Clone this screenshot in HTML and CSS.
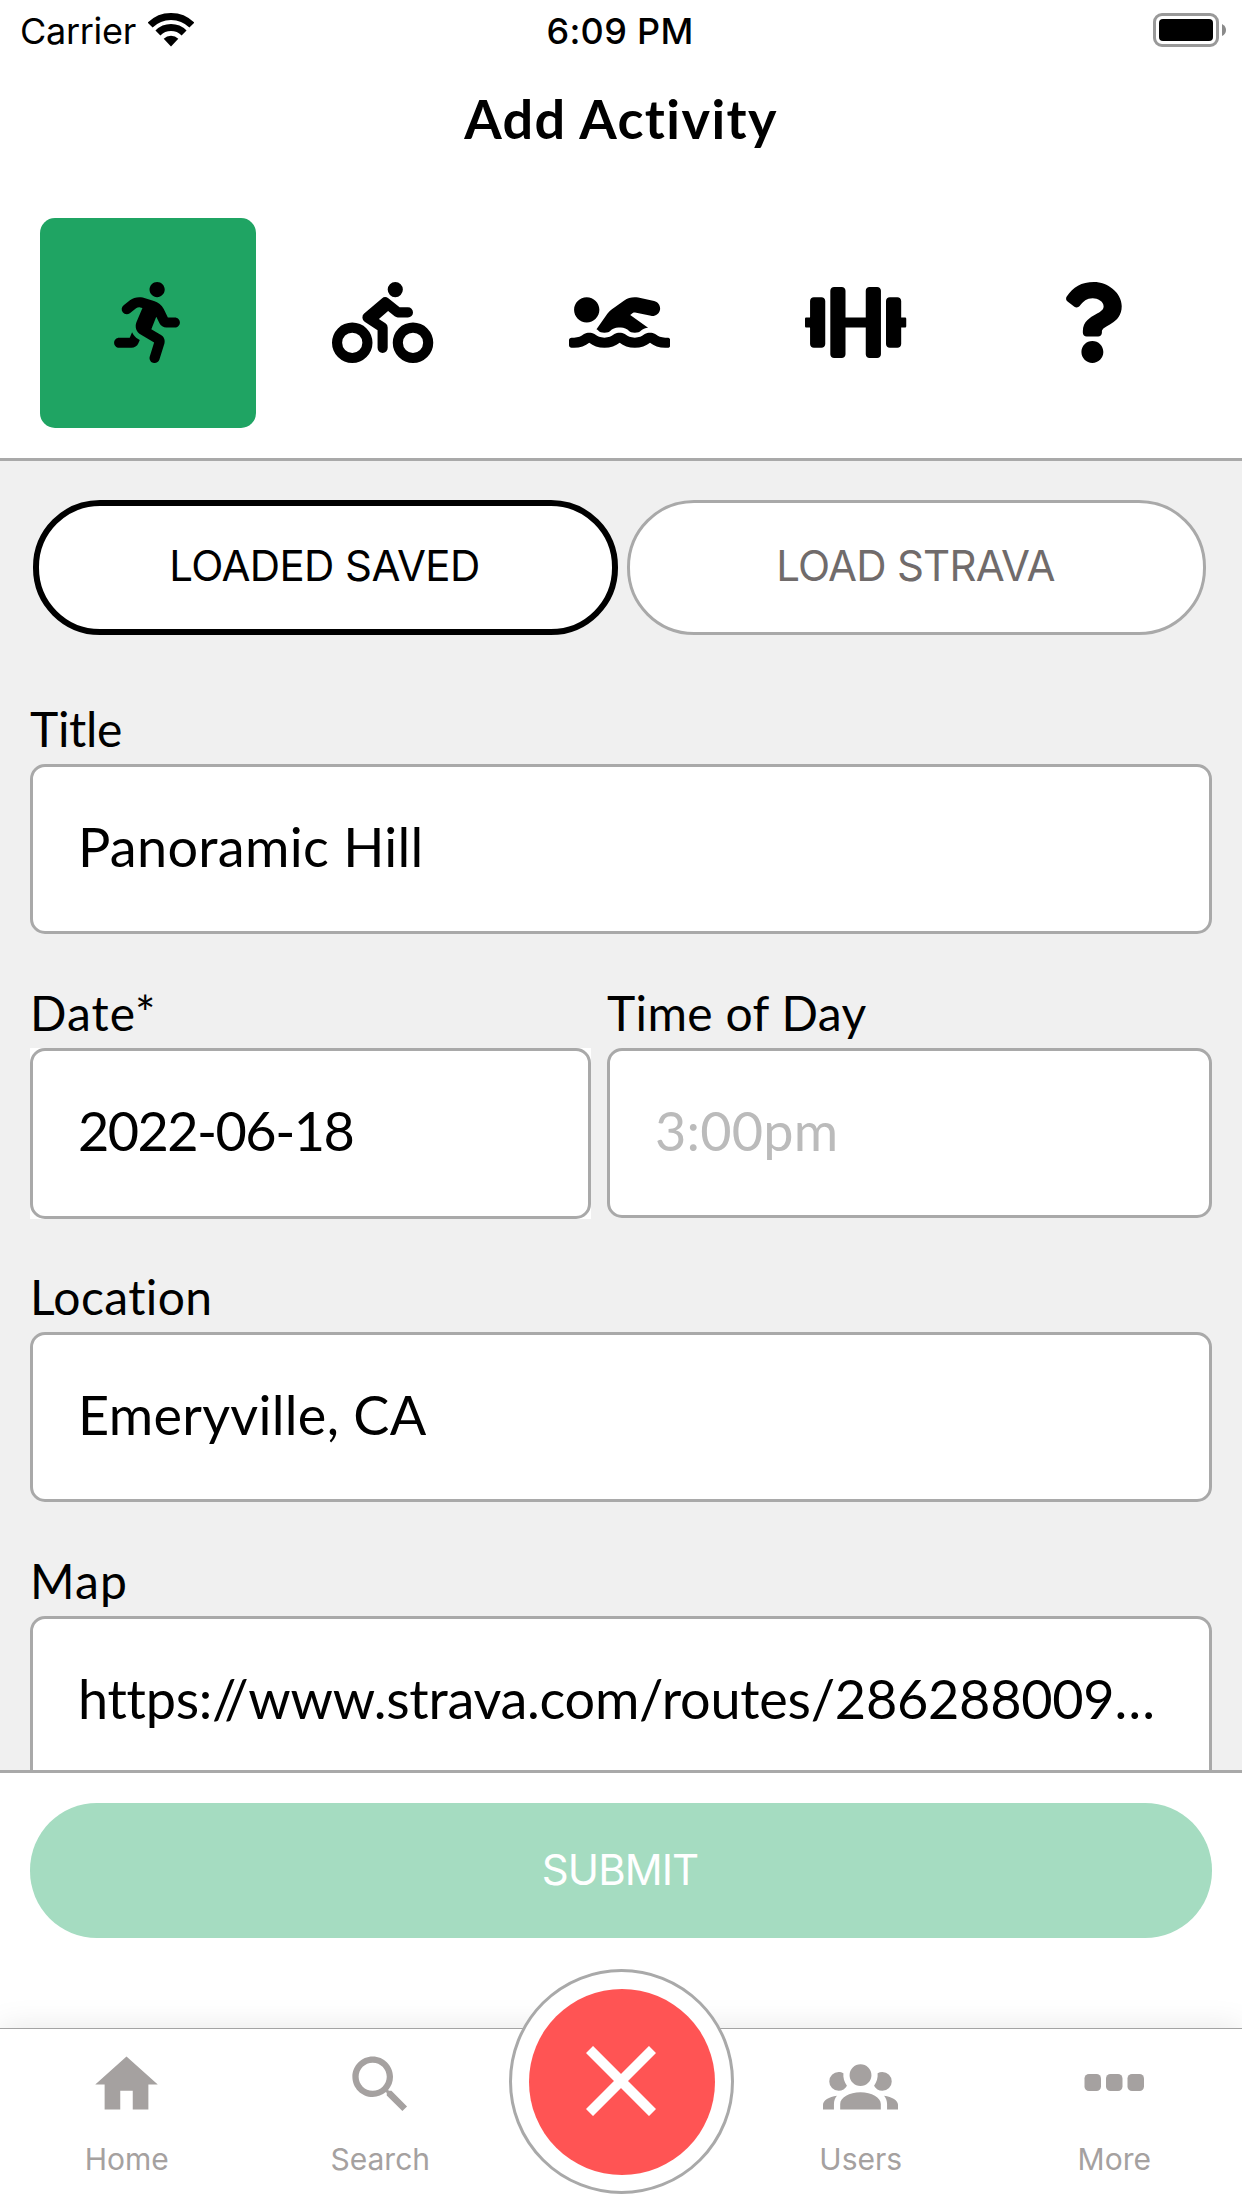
FILE: index.html
```
<!DOCTYPE html>
<html lang="en">
<head>
<meta charset="utf-8">
<title>Add Activity</title>
<link rel="stylesheet" href="styles.css">
</head>
<body>
<div class="screen">
  <div class="status">
    <div class="status-left">
      <span>Carrier</span>
      <svg class="wifi" viewBox="0 0 46 34" aria-hidden="true">
        <path d="M2.14 12.14A29.5 29.5 0 0 1 43.86 12.14M9.92 19.92A18.5 18.5 0 0 1 36.08 19.92" fill="none" stroke="#000" stroke-width="7"/>
        <path d="M23 33.5L15.7 25.7A10.5 10.5 0 0 1 30.3 25.7Z"/>
      </svg>
    </div>
    <span class="clock">6:09 PM</span>
    <svg class="battery" viewBox="0 0 74 34" aria-hidden="true">
      <rect x="1.5" y="1.5" width="63" height="31" rx="7.5" fill="none" stroke="#999" stroke-width="3"/>
      <rect x="6" y="6" width="54" height="22" rx="4" />
      <path d="M69 11Q73 13 73 17T69 23Z" fill="#8a8a8a"/>
    </svg>
  </div>

  <h1 class="title">Add Activity</h1>

  <div class="kinds">
    <button class="kind kind-on" aria-label="Run"><svg class="i416" viewBox="0 0 416 512"><path d="M272 96c26.51 0 48-21.49 48-48S298.51 0 272 0s-48 21.49-48 48 21.49 48 48 48zM113.69 317.47l-14.8 34.52H32c-17.67 0-32 14.33-32 32s14.33 32 32 32h77.45c19.25 0 36.58-11.44 44.11-29.09l8.79-20.52-10.67-6.3c-17.32-10.23-30.06-25.37-37.99-42.61zM384 223.99h-44.03l-26.06-53.25c-12.5-25.55-35.45-44.23-61.78-50.94l-71.08-21.14c-28.3-6.8-57.77-.55-80.84 17.14l-39.67 30.41c-14.03 10.75-16.69 30.83-5.92 44.86s30.84 16.66 44.86 5.92l39.69-30.41c7.67-5.89 17.44-8 25.27-6.14l14.7 4.37-37.46 87.39c-12.62 29.48-1.31 64.01 26.3 80.31l84.98 50.17-27.47 87.73c-5.28 16.86 4.11 34.82 20.97 40.09 3.19 1 6.41 1.48 9.58 1.48 13.61 0 26.23-8.77 30.52-22.45l31.64-101.06c5.91-20.77-2.89-43.08-21.64-54.13l-61.24-36.14 31.31-78.28 20.27 41.43c8 16.34 24.92 26.89 43.11 26.89H384c17.67 0 32-14.33 32-32s-14.33-31.99-32-31.99z"/></svg></button>
    <button class="kind" aria-label="Ride"><svg class="i640" viewBox="0 0 640 512"><path d="M400 96a48 48 0 1 0-48-48 48 48 0 0 0 48 48zm-4 121a31.9 31.9 0 0 0 20 7h64a32 32 0 0 0 0-64h-52.78L356 103a31.94 31.94 0 0 0-40.81.68l-112 96a32 32 0 0 0 3.08 50.92L288 305.12V416a32 32 0 0 0 64 0V288a32 32 0 0 0-14.25-26.62l-41.36-27.57 58.25-49.92zm116 39a128 128 0 1 0 128 128 128 128 0 0 0-128-128zm0 192a64 64 0 1 1 64-64 64 64 0 0 1-64 64zM128 256a128 128 0 1 0 128 128 128 128 0 0 0-128-128zm0 192a64 64 0 1 1 64-64 64 64 0 0 1-64 64z"/></svg></button>
    <button class="kind" aria-label="Swim"><svg class="i640" viewBox="0 0 640 512"><path d="M189.61 310.58c3.54 3.26 15.27 9.42 34.39 9.42s30.86-6.16 34.39-9.42c16.02-14.77 34.5-22.58 53.46-22.58h16.3c18.96 0 37.45 7.81 53.46 22.58 3.54 3.26 15.27 9.42 34.39 9.42s30.86-6.16 34.39-9.42c14.86-13.71 31.88-21.12 49.39-22.16l-112.84-80.6 18-12.86c3.64-2.58 8.28-3.52 12.62-2.61l100.35 21.53c25.91 5.53 51.44-10.97 57-36.88 5.55-25.92-10.95-51.44-36.88-57L437.68 98.47c-30.73-6.58-63.02.12-88.56 18.38l-80.02 57.17c-10.38 7.39-19.36 16.44-26.72 26.94L173.75 299c5.47 3.23 10.82 6.93 15.86 11.58zM624 352h-16c-26.04 0-45.8-8.42-56.09-17.9-8.9-8.21-19.66-14.1-31.77-14.1h-16.3c-12.11 0-22.87 5.89-31.77 14.1C461.8 343.58 442.04 352 416 352s-45.8-8.42-56.09-17.9c-8.9-8.21-19.66-14.1-31.77-14.1h-16.3c-12.11 0-22.87 5.89-31.77 14.1C269.8 343.58 250.04 352 224 352s-45.8-8.42-56.09-17.9c-8.9-8.21-19.66-14.1-31.77-14.1h-16.3c-12.11 0-22.87 5.89-31.77 14.1C77.8 343.58 58.04 352 32 352H16c-8.84 0-16 7.16-16 16v32c0 8.84 7.16 16 16 16h16c38.62 0 72.72-12.19 96-31.84 23.28 19.66 57.38 31.84 96 31.84s72.72-12.19 96-31.84c23.28 19.66 57.38 31.84 96 31.84s72.72-12.19 96-31.84c23.28 19.66 57.38 31.84 96 31.84h16c8.84 0 16-7.16 16-16v-32c0-8.84-7.16-16-16-16zm-512-96c44.18 0 80-35.82 80-80s-35.82-80-80-80-80 35.82-80 80 35.82 80 80 80z"/></svg></button>
    <button class="kind" aria-label="Lift"><svg class="i640" viewBox="0 0 640 512"><path d="M104 96H56c-13.3 0-24 10.7-24 24v104H8c-4.4 0-8 3.6-8 8v48c0 4.4 3.6 8 8 8h24v104c0 13.3 10.7 24 24 24h48c13.3 0 24-10.7 24-24V120c0-13.3-10.7-24-24-24zm528 128h-24V120c0-13.3-10.7-24-24-24h-48c-13.3 0-24 10.7-24 24v272c0 13.3 10.7 24 24 24h48c13.3 0 24-10.7 24-24V288h24c4.4 0 8-3.6 8-8v-48c0-4.4-3.6-8-8-8zM456 32h-48c-13.3 0-24 10.7-24 24v168H256V56c0-13.3-10.7-24-24-24h-48c-13.3 0-24 10.7-24 24v400c0 13.3 10.7 24 24 24h48c13.3 0 24-10.7 24-24V288h128v168c0 13.3 10.7 24 24 24h48c13.3 0 24-10.7 24-24V56c0-13.3-10.7-24-24-24z"/></svg></button>
    <button class="kind" aria-label="Other"><svg class="i384" viewBox="0 0 384 512"><path d="M202.021 0C122.202 0 70.503 32.703 29.914 91.026c-7.363 10.58-5.093 25.086 5.178 32.874l43.138 32.709c10.373 7.865 25.132 6.026 33.253-4.148 25.049-31.381 43.63-49.449 82.757-49.449 30.764 0 68.816 19.799 68.816 49.631 0 22.552-18.617 34.134-48.993 51.164-35.423 19.86-82.299 44.576-82.299 106.405V320c0 13.255 10.745 24 24 24h72.471c13.255 0 24-10.745 24-24v-5.773c0-42.86 125.268-44.645 125.268-160.627C377.504 66.256 286.902 0 202.021 0zM192 373.459c-38.196 0-69.271 31.075-69.271 69.271 0 38.195 31.075 69.27 69.271 69.27s69.271-31.075 69.271-69.271-31.075-69.27-69.271-69.27z"/></svg></button>
  </div>

  <div class="form">
    <div class="loaders">
      <button class="loader loader-on">LOADED SAVED</button>
      <button class="loader">LOAD STRAVA</button>
    </div>

    <div class="field">
      <div class="label label-title">Title</div>
      <div class="input">Panoramic Hill</div>
    </div>

    <div class="pair">
      <div class="field">
        <div class="label label-date">Date*</div>
        <div class="date-back"><div class="input input-date">2022-06-18</div></div>
      </div>
      <div class="field">
        <div class="label label-time">Time of Day</div>
        <div class="input input-time">3:00pm</div>
      </div>
    </div>

    <div class="field">
      <div class="label label-location">Location</div>
      <div class="input">Emeryville, CA</div>
    </div>

    <div class="field">
      <div class="label label-map">Map</div>
      <div class="input input-url">https://www.strava.com/routes/286288009…</div>
    </div>
  </div>

  <div class="footer">
    <button class="submit">SUBMIT</button>
  </div>

  <div class="tabs">
    <div class="tab">
      <svg viewBox="0 0 24 24"><path d="M10 20v-6h4v6h5v-8h3L12 3 2 12h3v8z"/></svg>
      <span>Home</span>
    </div>
    <div class="tab">
      <svg viewBox="0 0 24 24"><path d="M15.5 14h-.79l-.28-.27C15.41 12.59 16 11.11 16 9.5 16 5.91 13.09 3 9.5 3S3 5.91 3 9.5 5.91 16 9.5 16c1.61 0 3.09-.59 4.23-1.57l.27.28v.79l5 4.99L20.49 19l-4.99-5zm-6 0C7.01 14 5 11.99 5 9.5S7.01 5 9.5 5 14 7.01 14 9.5 11.99 14 9.5 14z"/></svg>
      <span>Search</span>
    </div>
    <div class="tab-gap">
      <button class="close" aria-label="Close">
        <span class="close-disc"><svg viewBox="0 0 70 70"><path d="M3.5 3.5L66.5 66.5M66.5 3.5L3.5 66.5" stroke="#fff" stroke-width="10"/></svg></span>
      </button>
    </div>
    <div class="tab">
      <svg viewBox="0 0 24 24"><path d="M12,5.5A3.5,3.5 0 0,1 15.5,9A3.5,3.5 0 0,1 12,12.5A3.5,3.5 0 0,1 8.5,9A3.5,3.5 0 0,1 12,5.5M5,8C5.56,8 6.08,8.15 6.53,8.42C6.38,9.85 6.8,11.27 7.66,12.38C7.16,13.34 6.16,14 5,14A3,3 0 0,1 2,11A3,3 0 0,1 5,8M19,8A3,3 0 0,1 22,11A3,3 0 0,1 19,14C17.84,14 16.84,13.34 16.34,12.38C17.2,11.27 17.62,9.85 17.47,8.42C17.92,8.15 18.44,8 19,8M5.5,18.25C5.5,16.18 8.41,14.5 12,14.5C15.59,14.5 18.5,16.18 18.5,18.25V20H5.5V18.25M0,20V18.5C0,17.11 1.89,15.94 4.45,15.6C3.86,16.28 3.5,17.22 3.5,18.25V20H0M24,20H20.5V18.25C20.5,17.22 20.14,16.28 19.55,15.6C22.11,15.94 24,17.11 24,18.5V20Z"/></svg>
      <span>Users</span>
    </div>
    <div class="tab">
      <svg viewBox="0 0 75 75"><rect x="7.5" y="27" width="16.5" height="17" rx="4.5"/><rect x="29" y="27" width="16.5" height="17" rx="4.5"/><rect x="50.5" y="27" width="16.5" height="17" rx="4.5"/></svg>
      <span>More</span>
    </div>
  </div>
</div>
</body>
</html>
```
FILE: styles.css
```
* { box-sizing: border-box; }

body {
  margin: 0;
  background: #fff;
  color: #000;
}

button {
  margin: 0;
  padding: 0;
  border: 0;
  background: none;
  color: inherit;
  font: inherit;
}

svg { display: block; }

.screen {
  width: 1242px;
  height: 2208px;
  display: flex;
  flex-direction: column;
  overflow: hidden;
  font-family: Lato, "Open Sans", sans-serif;
}

/* Status bar */
.status {
  height: 60px;
  padding: 2px 15px 0 20px;
  display: grid;
  grid-template-columns: 1fr auto 1fr;
  align-items: center;
  font: 400 36px/44px Inter, "Liberation Sans", sans-serif;
}
.status-left {
  display: flex;
  align-items: center;
  gap: 12px;
  letter-spacing: -0.3px;
}
.wifi { width: 46px; height: 34px; margin-bottom: 3px; }
.clock {
  margin-right: 7px;
  font-weight: 500;
  letter-spacing: 0.3px;
}
.battery { width: 74px; height: 34px; justify-self: end; margin-bottom: 2px; }

.title {
  margin: 0;
  padding-top: 26px;
  font-size: 54px;
  line-height: 65px;
  font-weight: 700;
  letter-spacing: 1.4px;
  text-align: center;
}

/* Activity kinds */
.kinds {
  height: 310px;
  padding: 67px 30px 30px;
  display: grid;
  grid-template-columns: repeat(5, 1fr);
  border-bottom: 3px solid #a9a9a9;
}
.kind {
  margin: 0 10px;
  padding: 0 3px 2px 0;
  border-radius: 15px;
  display: flex;
  align-items: center;
  justify-content: center;
}
.kind-on { background: #1fa463; }
.kind svg { height: 81px; }
.i416 { width: 66px; }
.i640 { width: 101.25px; }
.i384 { width: 60.75px; }

/* Form */
.form {
  height: 1309px;
  padding: 39px 30px 0;
  overflow: hidden;
  background: #f0f0f0;
}
.loaders {
  display: grid;
  grid-template-columns: 585px 579px;
  gap: 9px;
  height: 135px;
  margin: 0 6px 65px 3px;
}
.loader {
  border: 3px solid #a9a9a9;
  border-radius: 67px;
  padding: 0 2px 4px 0;
  background: #fff;
  color: #706b6b;
  font: 400 42px/51px Inter, "Liberation Sans", sans-serif;
  letter-spacing: -0.75px;
}
.loader-on {
  border: 6px solid #000;
  color: #000;
  letter-spacing: -0.6px;
}
.field { margin-bottom: 50px; }
.label {
  margin-bottom: 7px;
  font-size: 48px;
  line-height: 57px;
}
.label-title { letter-spacing: -0.3px; }
.label-date { letter-spacing: 1.1px; }
.label-time { letter-spacing: 0.35px; }
.label-location { letter-spacing: 0.4px; }
.label-map { letter-spacing: 1.1px; }
.input {
  height: 170px;
  padding: 0 0 5px 45px;
  display: flex;
  align-items: center;
  border: 3px solid #a9a9a9;
  border-radius: 15px;
  background: #fff;
  font-size: 54px;
  line-height: 65px;
  letter-spacing: 0.3px;
  white-space: nowrap;
}
.pair {
  display: grid;
  grid-template-columns: 561px 605px;
  justify-content: space-between;
}
.date-back {
  margin-bottom: -1px;
  background: #fff;
}
.input-date {
  height: 171px;
  padding: 0 0 6px 45px;
  letter-spacing: -1.55px;
}
.input-time {
  padding-left: 45px;
  color: #bbb;
  letter-spacing: 0.2px;
}
.input-url { letter-spacing: -0.25px; }

/* Submit */
.footer {
  height: 258px;
  padding: 30px 30px 0;
  border-top: 3px solid #a9a9a9;
}
.submit {
  width: 100%;
  height: 135px;
  padding: 0 2px 3px 0;
  border-radius: 67px;
  background: #a5dcc1;
  color: #fff;
  font: 400 42px/51px Inter, "Liberation Sans", sans-serif;
  letter-spacing: -0.95px;
}

/* Tab bar */
.tabs {
  height: 180px;
  padding-top: 18px;
  display: grid;
  grid-template-columns: 253.5px 253.5px 227px 253.5px 253.5px;
  border-top: 1px solid #a3a3a3;
  background: #fff;
  box-shadow: 0 0 30px rgba(0, 0, 0, 0.1);
}
.tab {
  display: flex;
  flex-direction: column;
  align-items: center;
  gap: 19px;
  color: #a5a1a0;
  font: 400 30px/36px Inter, "Liberation Sans", sans-serif;
}
.tab svg { width: 75px; height: 75px; fill: currentColor; }
.tab-gap { position: relative; }
.close {
  position: absolute;
  left: 2px;
  top: -78px;
  width: 225px;
  height: 225px;
  display: flex;
  align-items: center;
  justify-content: center;
  border: 3px solid #a9a9a9;
  border-radius: 50%;
  background: #fff;
}
.close-disc {
  width: 186px;
  height: 186px;
  padding: 0 1px 1px 0;
  display: flex;
  align-items: center;
  justify-content: center;
  border-radius: 50%;
  background: #ff5454;
}
.close-disc svg { width: 70px; height: 70px; }
```
